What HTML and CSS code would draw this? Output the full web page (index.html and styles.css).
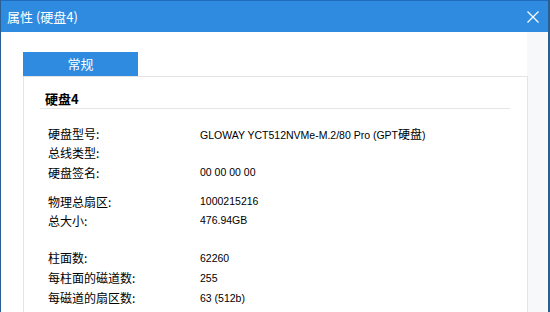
FILE: index.html
```html
<!DOCTYPE html>
<html lang="zh-CN">
<head>
    <meta charset="UTF-8">
    <title>属性 (硬盘4)</title>
    <link rel="stylesheet" href="styles.css">
</head>
<body>
    <div class="window">
        <div class="titlebar">
            <span class="title">属性 (硬盘4)</span>
            <svg class="close" width="12" height="12" viewBox="0 0 12 12">
                <path d="M0.5 0.5 L11.5 11.5 M11.5 0.5 L0.5 11.5" stroke="#fff" stroke-width="1.2" fill="none"/>
            </svg>
        </div>
        <div class="content">
            <div class="tab">常规</div>
            <div class="panel">
                <div class="heading">硬盘4</div>

                <div class="group g1">
                    <div class="row"><span class="label">硬盘型号:</span><span class="value">GLOWAY YCT512NVMe-M.2/80 Pro (GPT<span class="cjk">硬盘</span>)</span></div>
                    <div class="row"><span class="label">总线类型:</span><span class="value"></span></div>
                    <div class="row sig"><span class="label">硬盘签名:</span><span class="value">00 00 00 00</span></div>
                </div>

                <div class="group g2">
                    <div class="row"><span class="label">物理总扇区:</span><span class="value">1000215216</span></div>
                    <div class="row"><span class="label">总大小:</span><span class="value">476.94GB</span></div>
                </div>

                <div class="group g3">
                    <div class="row"><span class="label">柱面数:</span><span class="value">62260</span></div>
                    <div class="row"><span class="label">每柱面的磁道数:</span><span class="value">255</span></div>
                    <div class="row"><span class="label">每磁道的扇区数:</span><span class="value">63 (512b)</span></div>
                </div>
            </div>
        </div>
    </div>
</body>
</html>
```

FILE: styles.css
```css
body {
    margin: 0;
    background: #fff;
    font-family: "Noto Sans CJK SC", sans-serif;
}

.window {
    width: 550px;
    height: 312px;
    box-sizing: border-box;
    border-left: 1px solid #2b5f92;
    border-right: 2px solid #2b5f92;
    overflow: hidden;
    background: #fff;
}

.titlebar {
    height: 31px;
    border-top: 1px solid #1f6cbc;
    background: #2e8be0;
    display: flex;
    align-items: center;
    justify-content: space-between;
    padding: 0 9px 0 6px;
}

.title {
    color: #fff;
    font-size: 13px;
    line-height: 16px;
}

.close {
    display: block;
    margin-top: 1px;
}

.content {
    padding: 20px 0 0 22px;
    height: 260px;
    background: linear-gradient(to right, #fff 526px, #f6f8f9 526px);
}

.tab {
    width: 115px;
    height: 24px;
    background: #2e8be0;
    color: #fff;
    font-size: 13px;
    line-height: 24px;
    text-align: center;
}

.panel {
    width: 503px;
    height: 240px;
    border: 1px solid #e4e4e4;
    border-bottom: none;
    background: #fff;
}

.heading {
    margin: 13px 17px 0 16px;
    padding-left: 5px;
    height: 18px;
    line-height: 18px;
    font-size: 13px;
    font-weight: bold;
    color: #000;
    border-bottom: 1px solid #e6e6e6;
}

.group {
    padding-left: 24px;
}

.g1 {
    margin-top: 15px;
}

.g2 {
    margin-top: 10px;
}

.g3 {
    margin-top: 18px;
}

.row {
    display: flex;
    height: 19px;
    line-height: 19px;
    color: #000;
}

.g3 .row {
    height: 20px;
    line-height: 20px;
}

.row.sig {
    margin-top: 1px;
}

.label {
    width: 152px;
    font-size: 12px;
}

.value {
    font-family: "Liberation Sans", sans-serif;
    font-size: 10.5px;
}

.value .cjk {
    font-family: "Noto Sans CJK SC", sans-serif;
    font-size: 12px;
}
```
